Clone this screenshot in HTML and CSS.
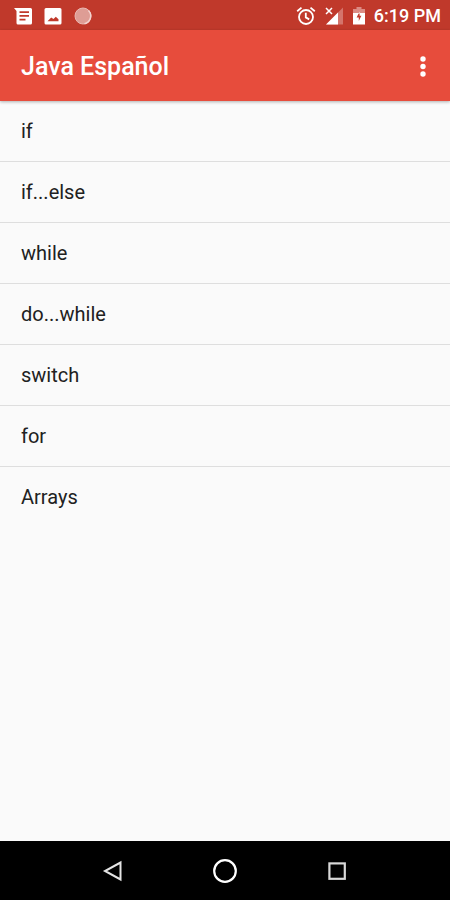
FILE: index.html
```html
<!DOCTYPE html>
<html lang="es">
<head>
  <meta charset="UTF-8" />
  <meta name="viewport" content="width=device-width, initial-scale=1" />
  <title>Java Español</title>
  <link rel="stylesheet" href="styles.css">
</head>
<body>

  <!-- Status bar -->
  <div class="status-bar">
    <div class="notifications">
      <svg width="20" height="20" viewBox="0 0 20 20">
        <path fill="#fff" fill-rule="evenodd" d="M1 2h16.500a1.500 1.500 0 0 1 1.500 1.500V17a1.500 1.500 0 0 1-1.500 1.500H5A1.500 1.500 0 0 1 3.500 17V5zM6.500 5.200v1.700h9.500V5.200zM6.500 9v1.700h9.500V9zM6.500 12.800v1.700h6v-1.700z"/>
      </svg>
      <svg width="20" height="20" viewBox="0 0 20 20">
        <path fill="#fff" fill-rule="evenodd" d="M3 2h14a1.500 1.500 0 0 1 1.500 1.500V17a1.500 1.500 0 0 1-1.500 1.500H3A1.500 1.500 0 0 1 1.500 17V3.500A1.500 1.500 0 0 1 3 2zM4.500 15.200h11v-2l-2.700-2.400-2.300 2.300-2.300-1.500z"/>
      </svg>
      <svg width="20" height="20" viewBox="0 0 20 20">
        <circle cx="10" cy="10" r="8" fill="#de9d95" stroke="#eab8b2"/>
        <path d="M15.500 4.500a8 8 0 0 1-4 13.300" fill="none" stroke="#f3d3cf" stroke-width="1.500"/>
      </svg>
    </div>
    <div class="system-icons">
      <svg width="20" height="20" viewBox="0 0 20 20" fill="none" stroke="#fff" stroke-width="1.800">
        <circle cx="10" cy="11" r="7"/>
        <path d="M1.200 5.200 5.500 1.600M18.800 5.200 14.500 1.600M9.800 6.800V11.400l3.400 2"/>
      </svg>
      <svg width="20" height="20" viewBox="0 0 20 20">
        <path fill="#d4746b" d="M19 1.500v17H2z"/>
        <path fill="#fff" d="M14 6.500v12H2z"/>
        <path stroke="#fff" stroke-width="1.500" d="M2 2l6 6M8 2 2 8"/>
      </svg>
      <svg width="14" height="20" viewBox="0 0 14 20">
        <path fill="#dc8b83" d="M4.500 1h5v2H13v5H1V3h3.500z"/>
        <path fill="#fff" fill-rule="evenodd" d="M1 7h12v11.500H1zM7.600 5.500 4.600 11.400h2.200v3.600L9.400 9.800H7.600z"/>
      </svg>
      <span class="clock">6:19 PM</span>
    </div>
  </div>

  <!-- App bar -->
  <header class="app-bar">
    <h1>Java Español</h1>
    <button class="menu-button" type="button" aria-label="Más opciones">
      <svg width="8" height="24" viewBox="0 0 8 24" fill="#fff">
        <circle cx="4" cy="4" r="2.700"/>
        <circle cx="4" cy="11.500" r="2.700"/>
        <circle cx="4" cy="19" r="2.700"/>
      </svg>
    </button>
  </header>

  <!-- Topics -->
  <main>
    <ul class="topics">
      <li><a href="#if">if</a></li>
      <li><a href="#if-else">if...else</a></li>
      <li><a href="#while">while</a></li>
      <li><a href="#do-while">do...while</a></li>
      <li><a href="#switch">switch</a></li>
      <li><a href="#for">for</a></li>
      <li><a href="#arrays">Arrays</a></li>
    </ul>
  </main>

  <!-- System navigation -->
  <nav class="nav-bar">
    <button type="button" aria-label="Atrás">
      <svg width="26" height="26" viewBox="0 0 26 26" fill="none" stroke="#e4e4e4" stroke-width="2">
        <path d="M20.500 4.500v17L5 13z"/>
      </svg>
    </button>
    <button type="button" aria-label="Inicio">
      <svg width="26" height="26" viewBox="0 0 26 26" fill="none" stroke="#fff" stroke-width="2.200">
        <circle cx="13" cy="13" r="10.800"/>
      </svg>
    </button>
    <button type="button" aria-label="Recientes">
      <svg width="26" height="26" viewBox="0 0 26 26" fill="none" stroke="#d8d8d8" stroke-width="2.200">
        <rect x="5.400" y="5.400" width="15.400" height="15.400"/>
      </svg>
    </button>
  </nav>

</body>
</html>
```
FILE: styles.css
```css
* { box-sizing: border-box; }
body {
  display: flex;
  flex-direction: column;
  min-height: 100vh;
  margin: 0;
  background: #fafafa;
  color: #212121;
  font-family: Roboto, sans-serif;
}
svg { display: block; }
button {
  padding: 0;
  border: 0;
  background: none;
  cursor: pointer;
}

.status-bar {
  display: flex;
  justify-content: space-between;
  align-items: center;
  height: 30px;
  padding: 2px 9px 0 13px;
  background: #c0392b;
  color: #fff;
}
.notifications { display: flex; gap: 10px; }
.system-icons { display: flex; align-items: center; gap: 8px; }
.clock { font-size: 18px; font-weight: 500; line-height: 20px; }

.app-bar {
  display: flex;
  justify-content: space-between;
  align-items: center;
  height: 71px;
  padding: 2px 11px 0 21px;
  background: #e74c3c;
  box-shadow: 0 1px 3px rgba(0, 0, 0, 0.3);
}
.app-bar h1 {
  margin: 0;
  color: #fff;
  font-size: 25px;
  font-weight: 500;
  line-height: 32px;
}
.menu-button {
  display: flex;
  justify-content: center;
  width: 32px;
}

main { flex: 1; }
.topics {
  margin: 0;
  padding: 0;
  list-style: none;
}
.topics li + li { border-top: 1px solid #dedede; }
.topics a {
  display: block;
  padding: 18px 21px;
  color: inherit;
  font-size: 20px;
  line-height: 24px;
  text-decoration: none;
}

.nav-bar {
  display: flex;
  justify-content: center;
  gap: 86px;
  height: 59px;
  background: #000;
}
```
